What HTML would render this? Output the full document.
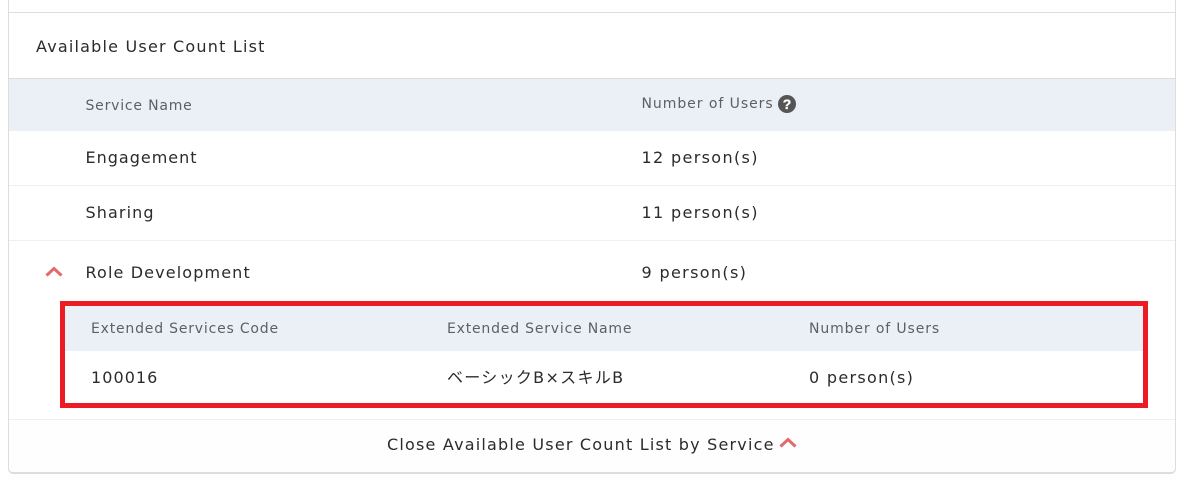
<!DOCTYPE html>
<html><head><meta charset="utf-8"><style>
html,body{margin:0;padding:0;background:#fff}
body{width:1183px;height:480px;position:relative;overflow:hidden;font-family:"DejaVu Sans","Noto Sans CJK JP",sans-serif;color:#333}
.a{position:absolute}
.t{position:absolute;white-space:nowrap;font-size:16px;line-height:20px;letter-spacing:1.2px;color:#2b2b2b}
.h{position:absolute;white-space:nowrap;font-size:14px;line-height:18px;letter-spacing:.8px;color:#5f5f5f}
</style></head><body>
<div class="a" style="left:9px;top:420px;width:1166px;height:53px;background:#fefefe;border-radius:0 0 5px 5px"></div>
<div class="a" style="left:8px;top:-10px;width:1166px;height:481px;border:1px solid #ddd;border-bottom-width:2px;border-radius:5px;box-sizing:content-box"></div>
<div class="a" style="left:9px;top:12px;width:1166px;height:1px;background:#ddd"></div>
<div class="t" style="left:36px;top:37px">Available User Count List</div>
<div class="a" style="left:9px;top:78px;width:1166px;height:1px;background:#ddd"></div>
<div class="a" style="left:9px;top:79px;width:1166px;height:52px;background:#ebf0f7"></div>
<div class="h" style="left:85.5px;top:97px">Service Name</div>
<div class="h" style="left:641.5px;top:95px;letter-spacing:.95px">Number of Users</div>
<svg class="a" style="left:778px;top:95px" width="18" height="18" viewBox="0 0 18 18"><circle cx="9" cy="9" r="9" fill="#555"/><text x="9" y="14" font-family="Liberation Sans" font-size="14" font-weight="700" fill="#fff" stroke="#fff" stroke-width=".3" text-anchor="middle">?</text></svg>
<div class="t" style="left:85.5px;top:148px;letter-spacing:1px">Engagement</div>
<div class="t" style="left:641.5px;top:148px;letter-spacing:1.35px">12 person(s)</div>
<div class="a" style="left:9px;top:185px;width:1166px;height:1px;background:#f0f0f0"></div>
<div class="t" style="left:85.5px;top:203px;letter-spacing:1.1px">Sharing</div>
<div class="t" style="left:641.5px;top:203px;letter-spacing:1.35px">11 person(s)</div>
<div class="a" style="left:9px;top:240px;width:1166px;height:1px;background:#f0f0f0"></div>
<svg class="a" style="left:45px;top:266px" width="18" height="11" viewBox="0 0 18 11"><path d="M1.5 9.5 L9 2.5 L16.5 9.5" fill="none" stroke="#e26a6a" stroke-width="3"/></svg>
<div class="t" style="left:85.5px;top:263px;letter-spacing:1.13px">Role Development</div>
<div class="t" style="left:641.5px;top:263px;letter-spacing:1.35px">9 person(s)</div>
<div class="a" style="left:65px;top:306px;width:1078px;height:45px;background:#ebf0f7"></div>
<div class="h" style="left:91px;top:320px">Extended Services Code</div>
<div class="h" style="left:447px;top:320px">Extended Service Name</div>
<div class="h" style="left:809px;top:320px;letter-spacing:.88px">Number of Users</div>
<div class="t" style="left:91px;top:368px;letter-spacing:1.05px">100016</div>
<div class="t" style="left:447px;top:368px;letter-spacing:1.3px">ベーシックB×スキルB</div>
<div class="t" style="left:809px;top:368px;letter-spacing:1.3px">0 person(s)</div>
<div class="a" style="left:60px;top:301px;width:1078px;height:97px;border:5px solid #ed1c24"></div>
<div class="a" style="left:9px;top:419px;width:1166px;height:1px;background:#f0f0f0"></div>
<div class="t" style="left:387px;top:435px">Close Available User Count List by Service</div>
<svg class="a" style="left:779px;top:437px" width="18" height="11" viewBox="0 0 18 11"><path d="M1.5 9.5 L9 2.5 L16.5 9.5" fill="none" stroke="#e26a6a" stroke-width="3"/></svg>
</body></html>
